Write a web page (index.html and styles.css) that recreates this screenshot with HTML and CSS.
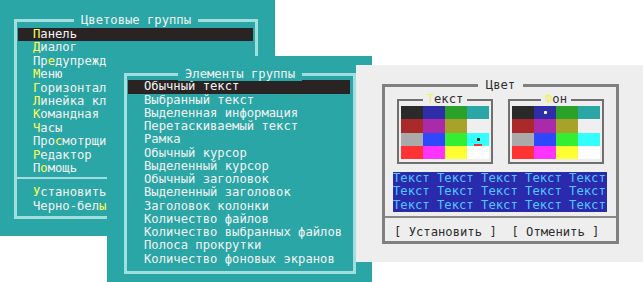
FILE: index.html
```html
<!DOCTYPE html>
<html lang="ru">
<head>
    <meta charset="UTF-8">
    <title>Настройка цветов</title>
    <link rel="stylesheet" href="styles.css">
</head>
<body>
    <div class="desk">

        <div class="win win-groups">
            <div class="frame">
                <div class="title"><span>Цветовые группы</span></div>
                <div class="row sel"><span class="hk">П</span>анель</div>
                <div class="row"><span class="hk">Д</span>иалог</div>
                <div class="row">Пр<span class="hk">е</span>дупрежд</div>
                <div class="row"><span class="hk">М</span>еню</div>
                <div class="row"><span class="hk">Г</span>оризонтал</div>
                <div class="row"><span class="hk">Л</span>инейка кл</div>
                <div class="row"><span class="hk">К</span>омандная</div>
                <div class="row"><span class="hk">Ч</span>асы</div>
                <div class="row">Про<span class="hk">с</span>мотрщи</div>
                <div class="row"><span class="hk">Р</span>едактор</div>
                <div class="row">П<span class="hk">о</span>мощь</div>
                <div class="sep"></div>
                <div class="row"><span class="hk">У</span>становить</div>
                <div class="row">Черно-бел<span class="hk">ы</span></div>
            </div>
        </div>

        <div class="win win-items">
            <div class="frame">
                <div class="title"><span>Элементы группы</span></div>
                <div class="row sel">Обычный текст</div>
                <div class="row">Выбранный текст</div>
                <div class="row">Выделенная информация</div>
                <div class="row">Перетаскиваемый текст</div>
                <div class="row">Рамка</div>
                <div class="row">Обычный курсор</div>
                <div class="row">Выделенный курсор</div>
                <div class="row">Обычный заголовок</div>
                <div class="row">Выделенный заголовок</div>
                <div class="row">Заголовок колонки</div>
                <div class="row">Количество файлов</div>
                <div class="row">Количество выбранных файлов</div>
                <div class="row">Полоса прокрутки</div>
                <div class="row">Количество фоновых экранов</div>
            </div>
        </div>

        <div class="win win-color">
            <div class="frame">
                <div class="title"><span>Цвет</span></div>
                <div class="boxes">
                    <div class="box">
                        <div class="title"><span><b class="hk">Т</b>екст</span></div>
                        <div class="palette">
                            <i class="c0"></i><i class="c1"></i><i class="c2"></i><i class="c3"></i>
                            <i class="c4"></i><i class="c5"></i><i class="c6"></i><i class="c7"></i>
                            <i class="c8"></i><i class="c9"></i><i class="c10"></i>
                            <i class="c11 mark"><b class="dot dark"></b><b class="dash"></b></i>
                            <i class="c12"></i><i class="c13"></i><i class="c14"></i><i class="c15"></i>
                        </div>
                    </div>
                    <div class="box">
                        <div class="title"><span><b class="hk">Ф</b>он</span></div>
                        <div class="palette">
                            <i class="c0"></i>
                            <i class="c1 mark"><b class="dot light"></b></i>
                            <i class="c2"></i><i class="c3"></i>
                            <i class="c4"></i><i class="c5"></i><i class="c6"></i><i class="c7"></i>
                            <i class="c8"></i><i class="c9"></i><i class="c10"></i><i class="c11"></i>
                            <i class="c12"></i><i class="c13"></i><i class="c14"></i><i class="c15"></i>
                        </div>
                    </div>
                </div>
                <div class="preview">
                    <div>Текст Текст Текст Текст Текст</div>
                    <div>Текст Текст Текст Текст Текст</div>
                    <div>Текст Текст Текст Текст Текст</div>
                </div>
                <div class="sep"></div>
                <div class="buttons">[ Установить ]  [ Отменить ]</div>
            </div>
        </div>

    </div>
</body>
</html>
```

FILE: styles.css
```css
body {
    margin: 0;
    background: #ffffff;
    font-family: "DejaVu Sans Mono", "Liberation Mono", monospace;
    font-size: 12.2px;
}
.desk {
    position: relative;
    width: 643px;
    height: 282px;
    overflow: hidden;
}

/* windows sit on the desktop at their own places */
.win {
    position: absolute;
    box-sizing: border-box;
}
.frame {
    position: relative;
    box-sizing: border-box;
}
.title {
    position: absolute;
    top: -8.5px;
    left: 0;
    right: 0;
    text-align: center;
    line-height: 12px;
    white-space: pre;
}
.title > span {
    padding: 0 7px;
}
.hk {
    color: #ffff55;
    font-weight: normal;
}

/* teal panels */
.win-groups,
.win-items {
    background: #2aa6a6;
    color: #f4f4f4;
}
.win-groups .frame,
.win-items .frame {
    border: 3px solid #a2dede;
}
.win-groups .title > span,
.win-items .title > span {
    background: #2aa6a6;
}
.row {
    height: 13.4px;
    line-height: 13.4px;
    white-space: pre;
    overflow: hidden;
    padding-left: 15px;
    margin: 0 2px 0 1px;
}
.row.sel {
    background: #2a2323;
}

.win-groups {
    left: 0;
    top: 0;
    width: 275px;
    height: 236px;
    padding: 19px 0 0 14px;
}
.win-groups .frame {
    width: 244px;
    height: 200px;
    padding-top: 6px;
}
.win-groups .sep {
    height: 2px;
    margin: 2px 0 6.9px;
    background: #a2dede;
}

.win-items {
    left: 107px;
    top: 56px;
    width: 265px;
    height: 226px;
    padding: 17px 0 0 17px;
}
.win-items .frame {
    width: 232px;
    height: 201px;
    padding-top: 4.4px;
}
.win-items .row {
    height: 13.25px;
    line-height: 13.25px;
    padding-left: 16px;
    margin: 0 3px 0 1px;
}

/* grey colour dialog */
.win-color {
    left: 356px;
    top: 65px;
    width: 287px;
    height: 197px;
    padding: 19px 0 0 26px;
    background: #eeeeee;
    color: #2e2e2e;
}
.win-color .frame {
    width: 237px;
    height: 160px;
    border: 3px solid #808080;
}
.win-color .title > span {
    background: #eeeeee;
    padding: 0 8px;
}
.win-color .hk {
    color: #f0ee66;
}
.boxes {
    display: flex;
    justify-content: center;
    gap: 15px;
    padding-top: 12px;
}
.box {
    position: relative;
    box-sizing: border-box;
    width: 96px;
    height: 65px;
    border: 2px solid #707070;
    padding: 5px 2px 3px;
}
.box .title {
    top: -8px;
}
.win-color .box .title > span {
    padding: 0 4px;
}
.palette {
    display: grid;
    grid-template-columns: repeat(4, 22px);
    grid-template-rows: repeat(4, 13.25px);
}
.palette i {
    display: flex;
    flex-direction: column;
    align-items: center;
}
.palette .mark {
    padding-top: 5px;
    gap: 3px;
}
.dot {
    width: 3px;
    height: 3px;
    border-radius: 1px;
}
.dot.dark {
    background: #111111;
}
.dot.light {
    background: #ffffff;
}
.dash {
    width: 8px;
    height: 2px;
    background: #ee3333;
}
.c0 { background: #2a2a2a; }
.c1 { background: #2e2ea8; }
.c2 { background: #2aa22a; }
.c3 { background: #2aa6a6; }
.c4 { background: #aa2a2a; }
.c5 { background: #aa2aaa; }
.c6 { background: #a8a22a; }
.c7 { background: #efefef; }
.c8 { background: #aaaaaa; }
.c9 { background: #2e48ff; }
.c10 { background: #33ee33; }
.c11 { background: #33ffff; }
.c12 { background: #ff3333; }
.c13 { background: #ff33ff; }
.c14 { background: #ffff33; }
.c15 { background: #ffffff; }

.preview {
    height: 40px;
    margin: 8px 9px 0 8px;
    background: #2a2aac;
    color: #52c6ff;
    line-height: 13.33px;
    overflow: hidden;
}
.preview div {
    white-space: pre;
}
.win-color .sep {
    height: 2px;
    margin-top: 4px;
    background: #888888;
}
.buttons {
    margin-top: 7px;
    padding-left: 9px;
    line-height: 14px;
    white-space: pre;
}
```
